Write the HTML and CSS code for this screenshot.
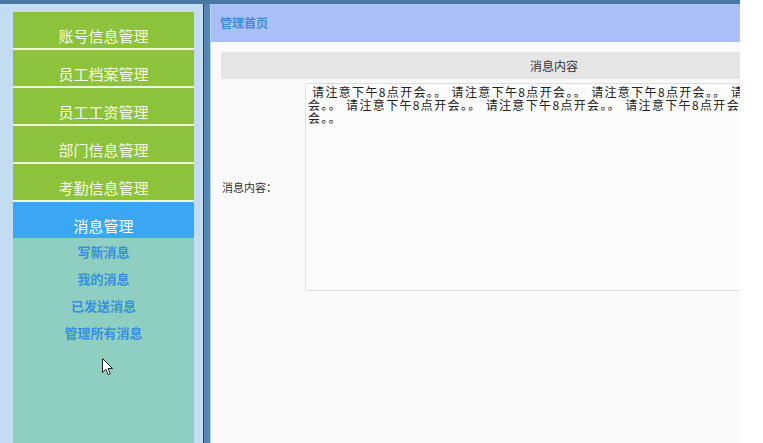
FILE: index.html
```html
<!DOCTYPE html>
<html lang="zh-CN">
<head>
<meta charset="utf-8">
<title>管理首页</title>
<link rel="stylesheet" href="styles.css">
</head>
<body>
<div class="frame">
  <aside class="sidebar">
    <ul class="menu">
      <li class="menu-item">账号信息管理</li>
      <li class="menu-item">员工档案管理</li>
      <li class="menu-item">员工工资管理</li>
      <li class="menu-item">部门信息管理</li>
      <li class="menu-item">考勤信息管理</li>
      <li class="menu-item active">消息管理</li>
    </ul>
    <div class="submenu">
      <a class="sub-link" href="#">写新消息</a>
      <a class="sub-link" href="#">我的消息</a>
      <a class="sub-link" href="#">已发送消息</a>
      <a class="sub-link" href="#">管理所有消息</a>
    </div>
    <svg class="cursor" width="13" height="19" viewBox="0 0 13 19">
      <path d="M1.5 1.5 L1.5 15.5 L4.8 12.3 L7.2 17.6 L9.3 16.7 L7 11.5 L11.5 11.5 Z" fill="#ffffff" stroke="#222222" stroke-width="1" stroke-linejoin="round"/>
    </svg>
  </aside>
  <div class="divider"></div>
  <main class="main">
    <div class="header">管理首页</div>
    <div class="content">
      <div class="msg-table">
        <div class="table-head">消息内容</div>
        <div class="table-row">
          <div class="row-label">消息内容：</div>
          <div class="msg-box"><div class="msg-line"> 请注意下午8点开会。。 请注意下午8点开会。。 请注意下午8点开会。。 请注意下午8点开</div><div class="msg-line">会。。 请注意下午8点开会。。 请注意下午8点开会。。 请注意下午8点开会。。 请注意下午8点开</div><div class="msg-line">会。。</div></div>
        </div>
      </div>
    </div>
  </main>
</div>
</body>
</html>
```

FILE: styles.css
```css
* {
  box-sizing: border-box;
}

html, body {
  margin: 0;
  padding: 0;
  background: #ffffff;
}

body {
  font-family: "Noto Sans CJK SC", "Noto Sans", sans-serif;
  width: 763px;
  height: 443px;
  overflow: hidden;
}

.frame {
  width: 740px;
  height: 443px;
  display: flex;
  border-top: 4px solid #4a78a4;
  overflow: hidden;
}

.sidebar {
  position: relative;
  width: 203px;
  flex: none;
  display: flex;
  flex-direction: column;
  background: #c3dcf2;
  padding: 8px 9px 0 13px;
}

.menu {
  list-style: none;
  margin: 0;
  padding: 0;
  display: flex;
  flex-direction: column;
  gap: 2px;
  background: #eef6dc;
}

.menu-item {
  height: 36px;
  padding-top: 14px;
  line-height: 20px;
  text-align: center;
  font-size: 15px;
  color: #f6faea;
  background: #8dc23b;
}

.menu-item.active {
  background: #3ba6f4;
  color: #ffffff;
}

.submenu {
  flex: 1;
  display: flex;
  flex-direction: column;
  align-items: center;
  background: #8fcfc1;
}

.sub-link {
  display: block;
  line-height: 27px;
  font-size: 13px;
  font-weight: bold;
  color: #3590e0;
  text-decoration: none;
}

.cursor {
  position: absolute;
  left: 101px;
  top: 353px;
}

.divider {
  width: 8px;
  flex: none;
  background: #5686b6;
  border-left: 1px solid #24496d;
  border-right: 1px solid #b6d3ee;
}

.main {
  flex: 1;
  min-width: 0;
  display: flex;
  flex-direction: column;
  background: #fafafa;
  overflow: hidden;
}

.header {
  height: 38px;
  flex: none;
  line-height: 38px;
  padding-left: 9px;
  font-size: 12px;
  font-weight: bold;
  color: #3a8ed8;
  background: #a9bff5;
}

.content {
  flex: 1;
  padding: 10px 0 0 10px;
}

.msg-table {
  width: 666px;
  display: flex;
  flex-direction: column;
  gap: 4px;
}

.table-head {
  height: 27px;
  line-height: 27px;
  text-align: center;
  font-size: 12px;
  color: #333333;
  background: #e5e5e5;
}

.table-row {
  display: grid;
  grid-template-columns: 84px 1fr;
  align-items: center;
}

.row-label {
  padding-left: 1px;
  font-size: 11px;
  color: #333333;
}

.msg-box {
  height: 208px;
  border: 1px solid #dedede;
  border-radius: 2px;
  background: #fcfcfc;
  padding: 1px 2px;
  overflow: hidden;
}

.msg-line {
  white-space: pre;
  font-size: 12px;
  letter-spacing: 1.35px;
  line-height: 13px;
  color: #222222;
}
```
